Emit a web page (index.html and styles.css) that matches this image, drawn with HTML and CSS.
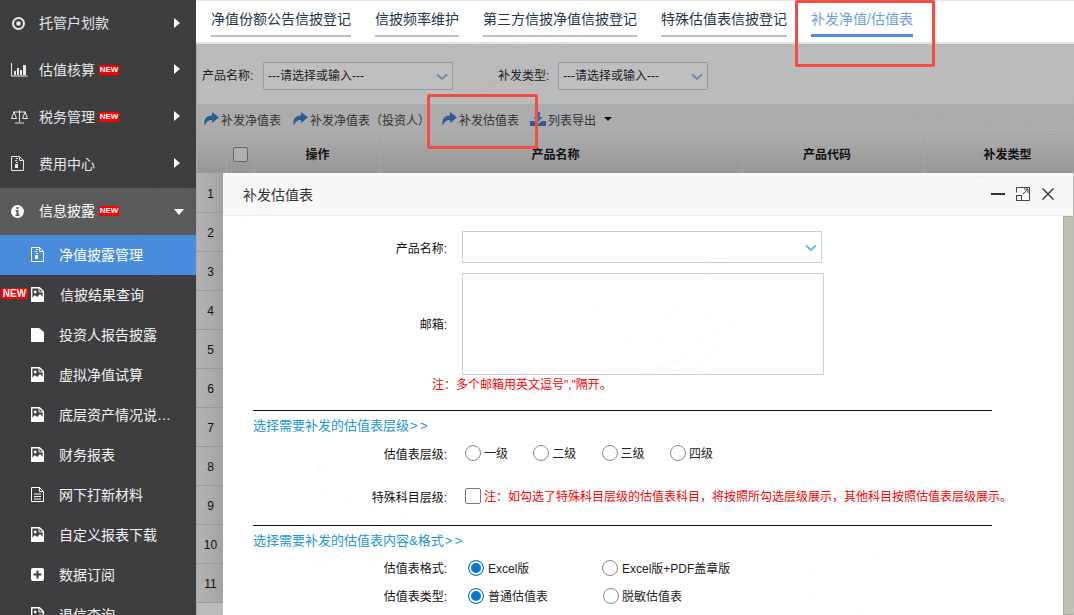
FILE: index.html
```html
<!DOCTYPE html>
<html lang="zh-CN">
<head>
<meta charset="utf-8">
<title>补发净值/估值表</title>
<link rel="stylesheet" href="styles.css">
</head>
<body>
<div class="app">
  <aside class="side">
    <div class="menu m-first"><svg class="mi" viewBox="0 0 17 15"><circle cx="7.500" cy="7.500" r="5.500" fill="none" stroke="#e8e8e8" stroke-width="2"/><circle cx="7.500" cy="7.500" r="2.300" fill="#e8e8e8"/></svg><span class="mt">托管户划款</span><i class="arr"></i></div>
    <div class="menu"><svg class="mi" viewBox="0 0 17 15"><path d="M.5 1v13H16.500" fill="none" stroke="#e8e8e8"/><path d="M3 9h2v4H3zM6 6h2v7H6zM9 8h2v5H9zM12 3h3v10h-3z" fill="#e8e8e8"/></svg><span class="mt">估值核算</span><b class="new">NEW</b><i class="arr"></i></div>
    <div class="menu"><svg class="mi" viewBox="0 0 17 15"><path d="M8.500 1v12M4 14h9M2 3h13M3 3 .5 9.500h5zM14 3l-2.500 6.500h5z" fill="none" stroke="#e8e8e8"/></svg><span class="mt">税务管理</span><b class="new">NEW</b><i class="arr"></i></div>
    <div class="menu"><svg class="mi" viewBox="0 0 17 15"><path d="M.5.500h8l4 4v10H.5z" fill="none" stroke="#e8e8e8"/><path d="M8.500.500v4h4" fill="none" stroke="#e8e8e8"/><path d="M5 2h2v1H5zM4 4h2v1H4zM5 6h2v1H5z" fill="#e8e8e8"/><rect x="4" y="8" width="3" height="4" fill="#e8e8e8"/></svg><span class="mt">费用中心</span><i class="arr"></i></div>
    <div class="menu open"><svg class="mi" viewBox="0 0 17 15"><circle cx="6.500" cy="7.500" r="6.500" fill="#fff"/><path d="M5.500 3h2v2h-2zM4.500 6H7.500v4.500h1V12h-4v-1.500h1V7.500h-1z" fill="#5a5a5b"/></svg><span class="mt">信息披露</span><b class="new">NEW</b><i class="down"></i></div>
    <div class="sub active"><svg class="si" viewBox="0 0 13 15"><path d="M.5.500h8l4 4v10H.5z" fill="none" stroke="#fff"/><path d="M8.500.500v4h4" fill="none" stroke="#fff"/><path d="M5 2h2v1H5zM4 4h2v1H4zM5 6h2v1H5z" fill="#fff"/><rect x="4" y="8" width="3" height="4" fill="#fff"/></svg><span>净值披露管理</span></div>
    <div class="sub"><b class="new big">NEW</b><svg class="si" viewBox="0 0 13 15"><use href="#pic"/></svg><span class="st2">信披结果查询</span></div>
    <div class="sub"><svg class="si" viewBox="0 0 13 15"><path d="M0 1h8l5 4v10H0z" fill="#fff"/></svg><span>投资人报告披露</span></div>
    <div class="sub"><svg class="si" viewBox="0 0 13 15"><use href="#pic"/></svg><span>虚拟净值试算</span></div>
    <div class="sub"><svg class="si" viewBox="0 0 13 15"><use href="#pic"/></svg><span>底层资产情况说…</span></div>
    <div class="sub"><svg class="si" viewBox="0 0 13 15"><use href="#pic"/></svg><span>财务报表</span></div>
    <div class="sub"><svg class="si" viewBox="0 0 13 15"><path d="M.5.500h8l4 4v10H.5z" fill="none" stroke="#fff"/><path d="M8.500.500v4h4M3 7h7M3 9.500h7M3 12h7" fill="none" stroke="#fff"/></svg><span>网下打新材料</span></div>
    <div class="sub"><svg class="si" viewBox="0 0 13 15"><use href="#pic"/></svg><span>自定义报表下载</span></div>
    <div class="sub"><svg class="si" viewBox="0 0 13 15"><path d="M2 1h9a2 2 0 0 1 2 2v9a2 2 0 0 1-2 2H2a2 2 0 0 1-2-2V3a2 2 0 0 1 2-2z" fill="#fff"/><path d="M5.500 3.500h2v3h3v2h-3v3h-2v-3h-3v-2h3z" fill="#3e3e40"/></svg><span>数据订阅</span></div>
    <div class="sub"><svg class="si" viewBox="0 0 13 15"><use href="#pic"/></svg><span>退信查询</span></div>
  </aside>

  <main class="main">
    <nav class="tabs">
      <a class="tab">净值份额公告信披登记</a>
      <a class="tab">信披频率维护</a>
      <a class="tab">第三方信披净值信披登记</a>
      <a class="tab">特殊估值表信披登记</a>
      <a class="tab on">补发净值/估值表</a>
    </nav>
    <div class="page">
      <div class="filter">
        <label class="fl">产品名称:</label>
        <div class="sel">---请选择或输入---<svg class="chev" viewBox="0 0 12 8"><path d="M1 1.500 6 6l5-4.500" fill="none" stroke="#6e8cae" stroke-width="2"/></svg></div>
        <label class="fl fl2">补发类型:</label>
        <div class="sel sel2">---请选择或输入---<svg class="chev" viewBox="0 0 12 8"><path d="M1 1.500 6 6l5-4.500" fill="none" stroke="#6e8cae" stroke-width="2"/></svg></div>
      </div>
      <div class="tools">
        <span class="tool"><svg class="share" viewBox="0 0 16 14"><path d="M9 0l7 5.500L9 11V8C6 8 3 9 2 14 0 8 3 3.500 9 3.500z" fill="#2c5c94"/></svg>补发净值表</span>
        <span class="tool"><svg class="share" viewBox="0 0 16 14"><path d="M9 0l7 5.500L9 11V8C6 8 3 9 2 14 0 8 3 3.500 9 3.500z" fill="#2c5c94"/></svg>补发净值表（投资人）</span>
        <span class="tool t3"><svg class="share" viewBox="0 0 16 14"><path d="M9 0l7 5.500L9 11V8C6 8 3 9 2 14 0 8 3 3.500 9 3.500z" fill="#2c5c94"/></svg>补发估值表</span>
        <span class="tool t4"><svg class="dl" viewBox="0 0 16 14"><path d="M6 0h4v5h3L8 10 3 5h3z" fill="#3a6aa2"/><path d="M0 9h4l4 3 4-3h4v5H0z" fill="#2c5c94"/></svg>列表导出<i class="caret"></i></span>
      </div>
      <div class="thead">
        <div class="c-n"></div>
        <div class="c-c"><i class="cb"></i></div>
        <div class="c-o">操作</div>
        <div class="c-p">产品名称</div>
        <div class="c-d">产品代码</div>
        <div class="c-t">补发类型</div>
      </div>
      <div class="rows">
        <div class="rn">1</div><div class="rn">2</div><div class="rn">3</div><div class="rn">4</div><div class="rn">5</div><div class="rn">6</div><div class="rn">7</div><div class="rn">8</div><div class="rn">9</div><div class="rn">10</div><div class="rn">11</div>
      </div>
    </div>
  </main>
</div>

<div class="callout call-tab"></div>
<div class="callout call-btn"></div>

<section class="dlg">
  <header class="dh">
    <span class="dt">补发估值表</span>
    <span class="dctl">
      <svg class="dc" viewBox="0 0 14 14"><path d="M0 7h14" stroke="#333" stroke-width="2"/></svg>
      <svg class="dc" viewBox="0 0 14 14"><path d="M.5 5.500V.5h13v13h-8M8 2h4v4M12 2 7 7" fill="none" stroke="#444"/><rect x=".5" y="8.500" width="5" height="5" fill="none" stroke="#444"/></svg>
      <svg class="dc" viewBox="0 0 14 14"><path d="m1.500 1.500 11 11m0-11-11 11" stroke="#333" stroke-width="1.400"/></svg>
    </span>
  </header>
  <div class="db">
    <div class="form">
      <div class="row r-name"><label class="lb">产品名称:</label><div class="inp">
        <svg class="chev blue" viewBox="0 0 12 8"><path d="M1 1.500 6 6l5-4.500" fill="none" stroke="#6cb4ee" stroke-width="2"/></svg></div></div>
      <div class="row r-mail"><label class="lb lb-mail">邮箱:</label><div class="ta"></div></div>
      <p class="note">注：多个邮箱用英文逗号","隔开。</p>
      <hr class="rule r1">
      <h3 class="sec">选择需要补发的估值表层级<span class="gt">&gt;&gt;</span></h3>
      <div class="row r-lv"><label class="lb">估值表层级:</label>
        <span class="opt"><i class="rad"></i>一级</span><span class="opt"><i class="rad"></i>二级</span><span class="opt"><i class="rad"></i>三级</span><span class="opt"><i class="rad"></i>四级</span></div>
      <div class="row r-sp"><label class="lb">特殊科目层级:</label><i class="chk"></i><span class="red">注：如勾选了特殊科目层级的估值表科目，将按照所勾选层级展示，其他科目按照估值表层级展示。</span></div>
      <hr class="rule r2">
      <h3 class="sec">选择需要补发的估值表内容&amp;格式<span class="gt">&gt;&gt;</span></h3>
      <div class="row r-f"><label class="lb">估值表格式:</label>
        <span class="opt2"><i class="rad sel-r"></i>Excel版</span><span class="opt2"><i class="rad"></i>Excel版+PDF盖章版</span></div>
      <div class="row r-t"><label class="lb">估值表类型:</label>
        <span class="opt2"><i class="rad sel-r"></i>普通估值表</span><span class="opt2 o-last"><i class="rad"></i>脱敏估值表</span></div>
    </div>
    <div class="sb"></div>
  </div>
</section>

<div class="wms">
<div class="wm w1">兴业证券<br>2025-09-10 17:08<br>192.20.49.32<br>80-E8-2C-F8-F5-8B<br>DESKTOP-GK98901<br>78738 姜琪</div>
<div class="wm w2">兴业证券<br>2025-09-10 17:08<br>192.20.49.32<br>80-E8-2C-F8-F5-8B<br>DESKTOP-GK98901<br>78738 姜琪</div>
<div class="wm w3">兴业证券<br>2025-09-10 17:08<br>192.20.49.32<br>80-E8-2C-F8-F5-8B<br>DESKTOP-GK98901<br>78738 姜琪</div>
<div class="wm w4">兴业证券<br>2025-09-10 17:08<br>192.20.49.32<br>80-E8-2C-F8-F5-8B<br>DESKTOP-GK98901<br>78738 姜琪</div>
<div class="wm w5">兴业证券<br>2025-09-10 17:08<br>192.20.49.32<br>80-E8-2C-F8-F5-8B<br>DESKTOP-GK98901<br>78738 姜琪</div>
<div class="wm w6">兴业证券<br>2025-09-10 17:08<br>192.20.49.32<br>80-E8-2C-F8-F5-8B<br>DESKTOP-GK98901<br>78738 姜琪</div>
</div>

<svg class="defs" width="0" height="0"><defs><g id="pic"><path d="M.7.700h7.800l3.800 3.800v9.800H.7z" fill="none" stroke="#fff" stroke-width="1.400"/><path d="M8 1v4h4" fill="none" stroke="#fff"/><path d="M1 14v-3l3-3 2 2 3-3 3 3v4z" fill="#fff"/><circle cx="4.200" cy="5" r="1.400" fill="#fff"/></g></defs></svg>
</body>
</html>
```

FILE: styles.css
```css
*{box-sizing:border-box}
html,body{margin:0;height:100%;overflow:hidden}
body{font-family:"Liberation Sans","Noto Sans CJK SC",sans-serif;font-size:13px;color:#222;position:relative;width:1074px;height:615px;background:#fff}
.app{display:flex;height:615px;overflow:hidden}
.side{width:196px;flex:none;background:#3e3e40;color:#e6e6e6;overflow:hidden}
.menu{height:47px;display:flex;align-items:center;position:relative;padding-left:11px;font-size:14px}
.m-first{height:46px}
.menu.open{height:47px;background:#5a5a5b;color:#fff;margin-top:1px;padding-bottom:1px}
.mi{width:17px;height:15px;flex:none;margin-right:11px}
.mt{line-height:20px}
.new{background:#f00;color:#fff;font-size:8px;font-weight:700;line-height:10px;height:10px;width:20px;text-align:center;margin-left:4px;border-radius:1px;font-family:"Liberation Sans",sans-serif}
.new.big{position:absolute;left:1px;top:13px;font-size:10px;height:11px;width:27px;line-height:11px;margin:0}
.arr{position:absolute;left:174px;top:18px;border-left:6px solid #fff;border-top:5.500px solid transparent;border-bottom:5.500px solid transparent}
.down{position:absolute;left:174px;top:21px;border-top:6px solid #fff;border-left:5.500px solid transparent;border-right:5.500px solid transparent}
.sub{height:40px;display:flex;align-items:center;padding:0 0 2px 31px;font-size:14px;color:#f2f2f2;position:relative}
.sub.active{background:#4a8cdc;color:#fff}
.si{width:13px;height:15px;flex:none;margin-right:15px}
.st2{margin-left:1px}
.main{flex:1;min-width:0;display:flex;flex-direction:column;position:relative;overflow:hidden}
.tabs{height:44px;background:#fff;display:flex;padding:1px 0 0 15px;gap:24px;border-top:1px solid #e4e4e4;box-shadow:inset 0 -2px 0 #dfe3e6}
.tab{font-size:14px;color:#23364a;line-height:28px;height:35px;border-bottom:2px solid #bdbdbd;white-space:nowrap;padding-top:3px}
.tab.on{color:#6f9fe2;border-bottom:3px solid #4a8cdc}
.page{flex:1;background:#bbbbbb;position:relative;border-left:1px solid #a8a8a8}
.filter{height:60px;display:flex;align-items:flex-start;padding:18px 0 0 5px;font-size:12px;color:#222}
.fl{line-height:28px;width:61px;white-space:nowrap}
.fl2{margin-left:45px;width:60px}
.sel{width:190px;height:28px;border:1px solid #8e99a5;background:#bfbfbf;border-radius:2px;line-height:27px;padding-left:4px;position:relative;color:#222;font-size:12px}
.sel2{width:150px}
.chev{position:absolute;right:4px;top:10px;width:12px;height:8px}
.tools{height:31px;background:#acacac;display:flex;align-items:center;padding-left:6px;font-size:12px;color:#333;border-bottom:1px solid #a4a4a4}
.tool{display:flex;align-items:center;white-space:nowrap;margin-right:11px}
.t3{margin-right:11px}
.t4{margin-right:0}
.share{width:16px;height:14px;margin-right:2px}
.dl{width:16px;height:14px;margin-right:2px}
.caret{display:inline-block;margin-left:8px;border-top:4px solid #111;border-left:4px solid transparent;border-right:4px solid transparent}
.thead{height:38px;display:flex;width:894px;background:linear-gradient(#acacac,#969696);font-size:12px;font-weight:700;color:#111;text-align:center;line-height:40px;position:relative}
.thead>div{border-right:1px solid #a4a4a4;flex:none}
.c-n{width:30px}
.c-c{width:28px;display:flex;align-items:center;justify-content:center}
.cb{width:15px;height:15px;border:1px solid #666;border-radius:2px;background:#b0b0b0}
.c-o{width:126px}
.c-p{width:362px;padding-right:12px}
.c-d{width:182px;padding-right:13px}
.c-t{width:166px}
.rows{width:27px;background:linear-gradient(90deg,#b4b4b4,#a2a2a2);padding-top:1px}
.rn{height:39px;border-bottom:1px solid #999;text-align:center;line-height:41px;font-size:12px;color:#111}
.callout{position:absolute;border:3px solid #f14d42;border-radius:2px;z-index:5}
.call-tab{left:795px;top:0;width:140px;height:67px}
.call-btn{left:427px;top:94px;width:111px;height:55px}
.dlg{position:absolute;left:223px;top:173px;width:850px;height:442px;background:#fff;display:flex;flex-direction:column;z-index:3}
.dh{height:43px;background:#f8f8f8;border-bottom:1px solid #eee;display:flex;align-items:center;padding:0 0 0 20px;position:relative;flex:none}
.dt{font-size:14px;color:#333}
.dctl{margin-left:auto;display:flex;gap:11px;padding-right:18px}
.dc{width:14px;height:14px}
.db{flex:1;display:flex;min-height:0;overflow:hidden}
.form{flex:1;padding-top:15px;position:relative;font-size:12px}
.sb{width:10px;background:#bfbfb4;border:1px solid #a9a99e;border-right:0;flex:none;margin-right:0}
.row{display:flex;align-items:center;position:relative}
.lb{width:224px;text-align:right;flex:none;color:#111;white-space:nowrap}
.inp{width:360px;height:32px;border:1px solid #c4d0dc;position:relative;margin-left:15px}
.inp .chev{right:4px;top:12px}
.r-name{height:32px}
.r-mail{margin-top:10px;height:102px}
.lb-mail{margin-bottom:2px}
.ta{width:362px;height:102px;border:1px solid #c4d0dc;margin-left:15px}
.note{margin:2px 0 0 209px;color:#f00;font-size:12px;line-height:16px}
.rule{margin:0 0 0 30px;width:739px;height:0;border:0;border-top:1px solid #111}
.r1{margin-top:17px}
.sec{margin:6px 0 0 30px;font-size:13px;font-weight:400;color:#2196dc;line-height:18px}
.gt{letter-spacing:2.500px;margin-left:1px}
.r-lv{height:20px;margin-top:7px}
.rad{display:inline-block;width:16px;height:16px;border:1px solid #8a8a8a;border-radius:50%;background:#fff;margin:2px 3px 0 0;flex:none}
.opt{display:flex;align-items:center;width:68.300px;color:#222}
.opt:first-of-type{margin-left:18px}
.r-lv .lb{margin-top:2px}
.r-sp{height:20px;margin-top:24px}
.chk{width:16px;height:16px;border:1px solid #777;border-radius:2px;margin-left:18px;margin-right:3px;flex:none;background:#fff}
.red{color:#f00;white-space:nowrap;font-size:12px;margin-top:-2px}
.r2{margin-top:19px}
.r-f{height:20px;margin-top:7px}
.r-t{height:20px;margin-top:8px}
.opt2{display:flex;align-items:center;width:134px;color:#222;white-space:nowrap}
.opt2:first-of-type{margin-left:21px}
.opt2 .rad{margin-right:4px}
.o-last{margin-left:1px}
.o-last .rad{margin-right:3px}
.sel-r{border:1.500px solid #0a78d6;box-shadow:inset 0 0 0 2px #fff;background:#0a78d6}
.defs{position:absolute}
.wms{position:absolute;left:0;top:0;width:1074px;height:615px;overflow:hidden;z-index:6;pointer-events:none}
.wm{position:absolute;font:400 18px/20px "Liberation Serif","Noto Sans CJK SC",serif;letter-spacing:.5px;color:rgba(0,0,0,.028);white-space:nowrap;transform-origin:0 0;transform:rotate(-32deg)}
.w1{left:105px;top:203px}
.w2{left:432px;top:13px}
.w3{left:262px;top:496px}
.w4{left:589px;top:306px}
.w5{left:909px;top:116px}
.w6{left:752px;top:599px}
```
